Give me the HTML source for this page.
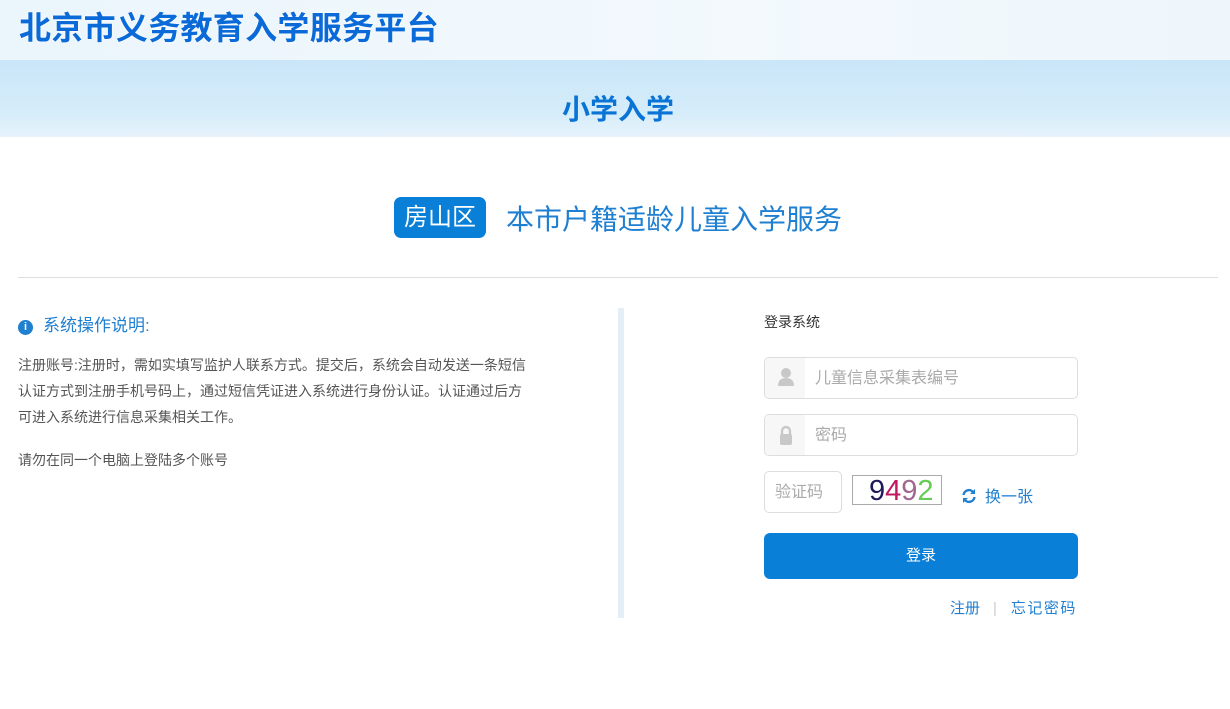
<!DOCTYPE html>
<html><head><meta charset="utf-8"><style>
*{margin:0;padding:0;box-sizing:border-box}
body{width:1230px;height:709px;background:#fff;font-family:"Liberation Sans","Noto Sans CJK SC",sans-serif;position:relative;overflow:hidden}
.top{position:absolute;left:0;top:0;width:1230px;height:60px;background:linear-gradient(90deg,#eaf5fc,#f3f9fd 60%,#eef6fc)}
.t1{position:absolute;left:19px;top:3px;font-size:32px;font-weight:bold;color:#0a6ad8;letter-spacing:0.3px;text-shadow:0 0 2px #fff,0 0 2px #fff}
.ban{position:absolute;left:0;top:60px;width:1230px;height:77px;background:linear-gradient(180deg,#c9e6f8,#d6edfa 70%,#e7f3fb)}
.t2{position:absolute;left:0;width:1230px;top:88px;padding-left:6px;text-align:center;font-size:28px;font-weight:bold;color:#0a74d6}
.dist{position:absolute;left:394px;top:197px;width:92px;height:41px;background:#0a7fd7;color:#fff;border-radius:7px;font-size:24px;text-align:center;line-height:41px}
.ttl{position:absolute;left:506px;top:198px;font-size:28px;color:#1f7fd0}
.hr{position:absolute;left:18px;top:277px;width:1200px;height:1px;background:#ddd}
.vl{position:absolute;left:618px;top:308px;width:6px;height:310px;background:#e3eef7}
.h3{position:absolute;left:18px;top:311px;font-size:17px;color:#1f7fd0}
.h3 i{display:inline-block;width:15px;height:15px;border-radius:50%;background:#1f7fd0;color:#fff;font-style:normal;font-size:11px;text-align:center;line-height:15px;font-weight:bold;margin-right:10px;vertical-align:1px}
.p{position:absolute;left:18px;font-size:14px;color:#555;line-height:26px;width:515px}
.lg{position:absolute;left:764px;top:312px;font-size:14px;color:#333}
.in{position:absolute;left:764px;width:314px;height:42px;border:1px solid #ddd;border-radius:5px;background:#fff;font-size:16px;color:#aaa;line-height:42px;padding-left:50px}
.ic{position:absolute;left:0;top:0;width:40px;height:40px;background:#f7f7f7;border-radius:5px 0 0 5px}
.btn{position:absolute;left:764px;top:533px;width:314px;height:46px;background:#0a7fd7;color:#fff;border-radius:6px;text-align:center;line-height:46px;font-size:15px}
</style></head><body>
<div class="top"><div class="t1">北京市义务教育入学服务平台</div></div>
<div class="ban"></div><div class="t2">小学入学</div>
<div class="dist">房山区</div><div class="ttl">本市户籍适龄儿童入学服务</div>
<div class="hr"></div><div class="vl"></div>
<div class="h3"><i>i</i>系统操作说明:</div>
<div class="p" style="top:352px">注册账号:注册时，需如实填写监护人联系方式。提交后，系统会自动发送一条短信认证方式到注册手机号码上，通过短信凭证进入系统进行身份认证。认证通过后方可进入系统进行信息采集相关工作。</div>
<div class="p" style="top:447px">请勿在同一个电脑上登陆多个账号</div>
<div class="lg">登录系统</div>
<div class="in" style="top:357px"><div class="ic"><svg width="40" height="40"><circle cx="21" cy="15" r="5" fill="#c8c8c8"/><path d="M13 28q0-8 8-8t8 8z" fill="#c8c8c8"/></svg></div>儿童信息采集表编号</div>
<div class="in" style="top:414px"><div class="ic"><svg width="40" height="40"><rect x="15" y="19" width="12" height="11" rx="2" fill="#c8c8c8"/><path d="M17 20v-4a4 4 0 0 1 8 0v4" stroke="#c8c8c8" stroke-width="2.4" fill="none"/></svg></div>密码</div>
<div class="in" style="top:471px;width:78px;padding-left:10px">验证码</div>
<div style="position:absolute;left:852px;top:475px;width:90px;height:30px;border:1px solid #aaa;font-size:29px;line-height:30px;padding-left:16px;font-family:'Liberation Sans',sans-serif"><span style="color:#1e1a5a">9</span><span style="color:#c0185e">4</span><span style="color:#a06890">9</span><span style="color:#66cc55">2</span></div>
<div style="position:absolute;left:961px;top:483px;font-size:16px;color:#1f7fd0"><svg width="16" height="16" viewBox="0 0 16 16" style="vertical-align:-2px;margin-right:8px"><path d="M2.5 7a5.5 5.5 0 0 1 10-2.5" stroke="#1f7fd0" stroke-width="2.4" fill="none"/><path d="M14 1v5h-5z" fill="#1f7fd0"/><path d="M13.5 9a5.5 5.5 0 0 1-10 2.5" stroke="#1f7fd0" stroke-width="2.4" fill="none"/><path d="M2 15v-5h5z" fill="#1f7fd0"/></svg>换一张</div>
<div class="btn">登录</div>
<div style="position:absolute;left:950px;top:597px;font-size:15px;color:#1f7fd0">注册<span style="color:#ccc;margin:0 14px 0 13px">|</span><span style="letter-spacing:1.5px">忘记密码</span></div>
</body></html>
